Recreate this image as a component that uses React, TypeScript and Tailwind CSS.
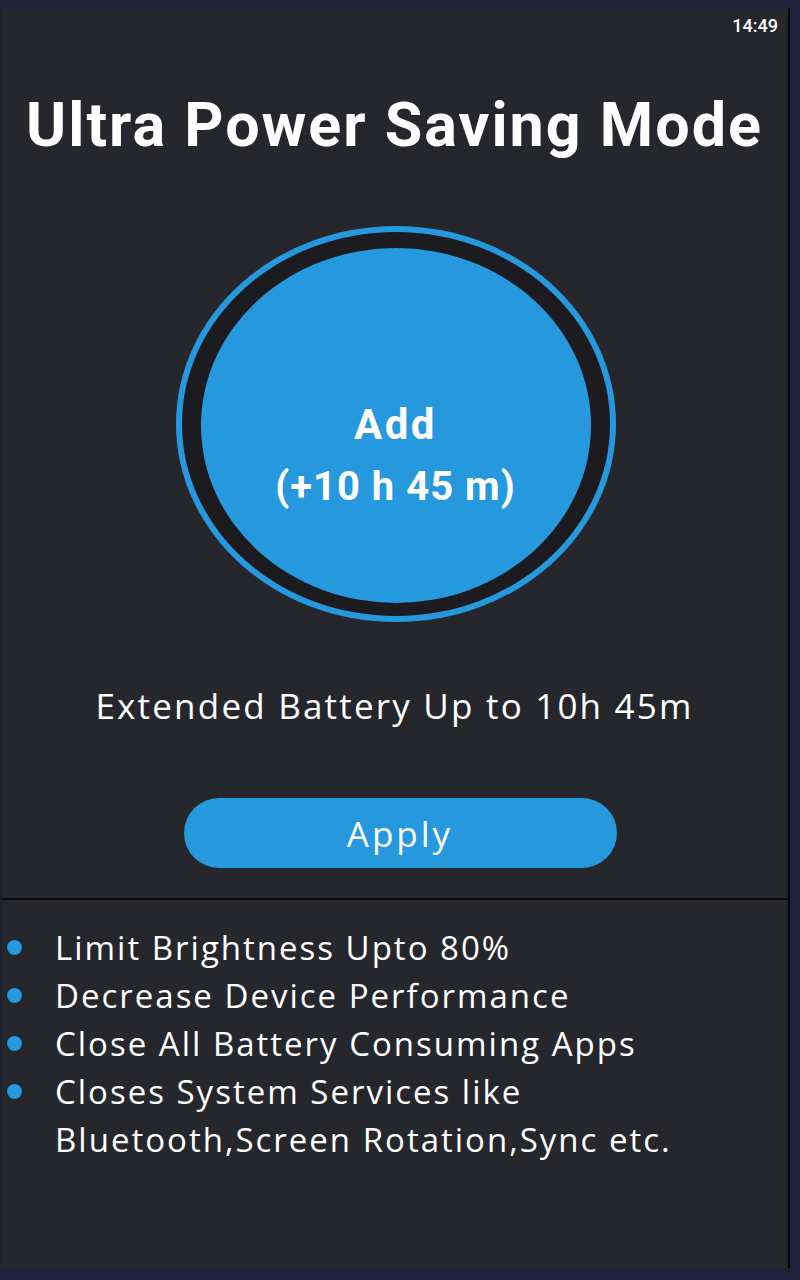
import React from 'react';

const features = [
    'Limit Brightness Upto 80%',
    'Decrease Device Performance',
    'Close All Battery Consuming Apps',
    'Closes System Services like Bluetooth,Screen Rotation,Sync etc.',
];

export default function App() {
    return (
        <div className="w-[800px] h-[1280px] bg-[#1f2039] pt-2 pr-[10px] pb-3 pl-px">
            <div className="h-full bg-[#26272c] border-r-2 border-black flex flex-col text-white font-['Open_Sans',sans-serif]">
                {/* status bar */}
                <div className="h-[34px] flex justify-end items-center pr-[10px] text-[18px] font-['Roboto',sans-serif] font-medium">
                    14:49
                </div>

                <h1 className="mt-[48px] text-center text-[61px] leading-[70px] font-bold font-['Roboto',sans-serif] tracking-[2px]">
                    Ultra Power Saving Mode
                </h1>

                {/* big add circle */}
                <div className="mt-[66px] flex justify-center">
                    <div className="w-[440px] h-[396px] ml-[2px] rounded-[50%] border-[6px] border-[#2598de] bg-[#1c1c20] pt-[16px] pb-[13px] px-[19px]">
                        <div className="w-full h-full rounded-[50%] bg-[#2598de] flex flex-col items-center pt-[152px] font-['Roboto',sans-serif] font-bold">
                            <div className="text-[42px] leading-[50px] tracking-[2.5px]">Add</div>
                            <div className="mt-[12px] text-[40px] leading-[50px] tracking-[1px]">(+10 h 45 m)</div>
                        </div>
                    </div>
                </div>

                <p className="mt-[62px] text-center text-[35px] leading-[44px] tracking-[2.2px]">
                    Extended Battery Up to 10h 45m
                </p>

                <div className="mt-[70px] flex justify-center">
                    <button className="w-[433px] h-[70px] ml-[11px] rounded-full bg-[#2598de] text-[35px] leading-none tracking-[3px] text-white">
                        Apply
                    </button>
                </div>

                <div className="mt-[30px] h-[2px] bg-[#0c0c0e]" />

                <ul className="mt-[24px] flex flex-col">
                    {features.map((f) => (
                        <li key={f} className="flex items-start text-[33px] leading-[48px] tracking-[2px]">
                            <span className="mt-[16px] ml-[6px] w-[15px] h-[15px] rounded-full bg-[#2598de] shrink-0" />
                            <span className="ml-[33px] pr-[60px]">{f}</span>
                        </li>
                    ))}
                </ul>
            </div>
        </div>
    );
}
